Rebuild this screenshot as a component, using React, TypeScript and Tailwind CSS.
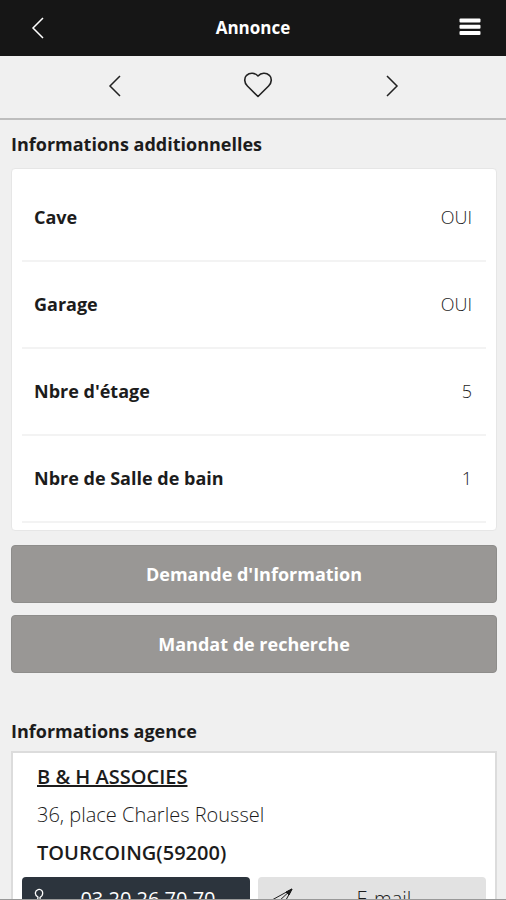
const details = [
  { label: "Cave", value: "OUI" },
  { label: "Garage", value: "OUI" },
  { label: "Nbre d'étage", value: "5" },
  { label: "Nbre de Salle de bain", value: "1" },
];

const Chevron = ({ direction }: { direction: "left" | "right" }) => (
  <svg
    className="h-6 w-4"
    viewBox="0 0 16 24"
    fill="none"
    stroke="currentColor"
    strokeWidth="1.5"
    aria-hidden="true"
  >
    <path d={direction === "left" ? "M13 2 3 12l10 10" : "M3 2l10 10L3 22"} />
  </svg>
);

const Header = () => (
  <header className="grid h-14 shrink-0 grid-cols-[1fr_auto_1fr] items-center bg-[#161616] px-6 text-white">
    <button
      type="button"
      aria-label="Retour"
      className="justify-self-start px-[6px]"
    >
      <Chevron direction="left" />
    </button>
    <h1 className="text-[17px] font-bold">Annonce</h1>
    <button type="button" aria-label="Menu" className="justify-self-end">
      <svg
        className="h-6 w-6"
        viewBox="0 0 24 24"
        fill="currentColor"
        aria-hidden="true"
      >
        <rect x="1.500" y="2.500" width="21" height="4" rx="1" />
        <rect x="1.500" y="8.700" width="21" height="4" rx="1" />
        <rect x="1.500" y="14.900" width="21" height="4" rx="1" />
      </svg>
    </button>
  </header>
);

const ListingNav = () => (
  <nav className="flex h-16 shrink-0 items-center justify-between border-b-2 border-[#bdbdbd] pr-[106px] pb-[2px] pl-[107px] text-[#222]">
    <button type="button" aria-label="Annonce précédente">
      <Chevron direction="left" />
    </button>
    <button type="button" aria-label="Ajouter aux favoris" className="pb-1 pl-2">
      <svg
        className="h-7 w-8"
        viewBox="0 0 32 28"
        fill="none"
        stroke="currentColor"
        strokeWidth="1.6"
        strokeLinejoin="round"
        aria-hidden="true"
      >
        <path d="M16 26.500 5.400 16C2 12.500 2 8 4.600 5.300 7.800 2.300 12.800 2.500 16 6c3.200-3.500 8.200-3.700 11.400-.7C30 8 30 12.500 26.600 16Z" />
      </svg>
    </button>
    <button type="button" aria-label="Annonce suivante">
      <Chevron direction="right" />
    </button>
  </nav>
);

export default function App() {
  return (
    <div className="flex h-screen flex-col overflow-hidden border-b border-[#999] bg-[#f0f0f0] font-['Open_Sans',sans-serif] text-[#1c1c1c]">
      <Header />
      <ListingNav />

      <main className="min-h-0 flex-1 overflow-hidden pr-[9px] pl-[11px]">
        {/* Informations additionnelles */}
        <section>
          <h2 className="pt-3 pb-3 text-[18px] leading-6 font-bold">
            Informations additionnelles
          </h2>
          <dl className="rounded border border-[#e6e6e6] bg-white px-[10px] pt-[6px] pb-[7px]">
            {details.map((item) => (
              <div
                key={item.label}
                className="flex h-[87px] items-center justify-between border-b-2 border-[#f3f3f3] pr-[14px] pl-3 text-[18px]"
              >
                <dt className="font-bold">{item.label}</dt>
                <dd className="font-light">{item.value}</dd>
              </div>
            ))}
          </dl>
        </section>

        {/* Actions */}
        <div className="mt-[14px] flex flex-col gap-3">
          <button
            type="button"
            className="h-[58px] rounded border border-[#8e8d8b] bg-[#999795] text-[18px] font-bold text-white"
          >
            Demande d'Information
          </button>
          <button
            type="button"
            className="h-[58px] rounded border border-[#8e8d8b] bg-[#999795] text-[18px] font-bold text-white"
          >
            Mandat de recherche
          </button>
        </div>

        {/* Informations agence */}
        <section className="mt-9">
          <h2 className="pt-[10px] pb-2 text-[18px] leading-6 font-bold">
            Informations agence
          </h2>
          <div className="border-2 border-[#dcdcdc] bg-white px-[9px] pt-[5px]">
            <address className="px-[15px] text-[20px] leading-[38px] not-italic">
              <a href="#agence" className="block font-semibold underline">
                B &amp; H ASSOCIES
              </a>
              <p className="font-light">36, place Charles Roussel</p>
              <p className="font-semibold">TOURCOING(59200)</p>
            </address>
            <div className="mt-[5px] grid grid-cols-2 gap-2 text-[20px]">
              <a
                href="tel:0320267070"
                className="flex h-11 items-center gap-2 rounded bg-[#2c343d] px-[10px] text-white"
              >
                <svg
                  className="h-6 w-4"
                  viewBox="0 0 16 24"
                  fill="none"
                  stroke="currentColor"
                  strokeWidth="1.300"
                  aria-hidden="true"
                >
                  <path d="M6 10C2 8 3 3.500 6 2.600c3-1 6 2 4 6l-2 2c0 4 2 6.400 5 9.400l2-1c2 2 0 4-2 4C8 22 5 16 6 10Z" />
                </svg>
                <span className="flex-1 text-center">03 20 26 70 70</span>
              </a>
              <a
                href="#email"
                className="flex h-11 items-center rounded bg-[#e2e2e2] px-3 font-light"
              >
                <svg
                  className="h-6 w-6"
                  viewBox="0 0 24 24"
                  fill="none"
                  stroke="currentColor"
                  strokeLinejoin="round"
                  aria-hidden="true"
                >
                  <path d="M22 2 2 13l6 2 3 7Z" />
                  <path d="M22 2 8 15" />
                  <path d="M22 2l-6 3 3 3Z" fill="currentColor" />
                </svg>
                <span className="flex-1 text-center">E-mail</span>
              </a>
            </div>
          </div>
        </section>
      </main>
    </div>
  );
}
